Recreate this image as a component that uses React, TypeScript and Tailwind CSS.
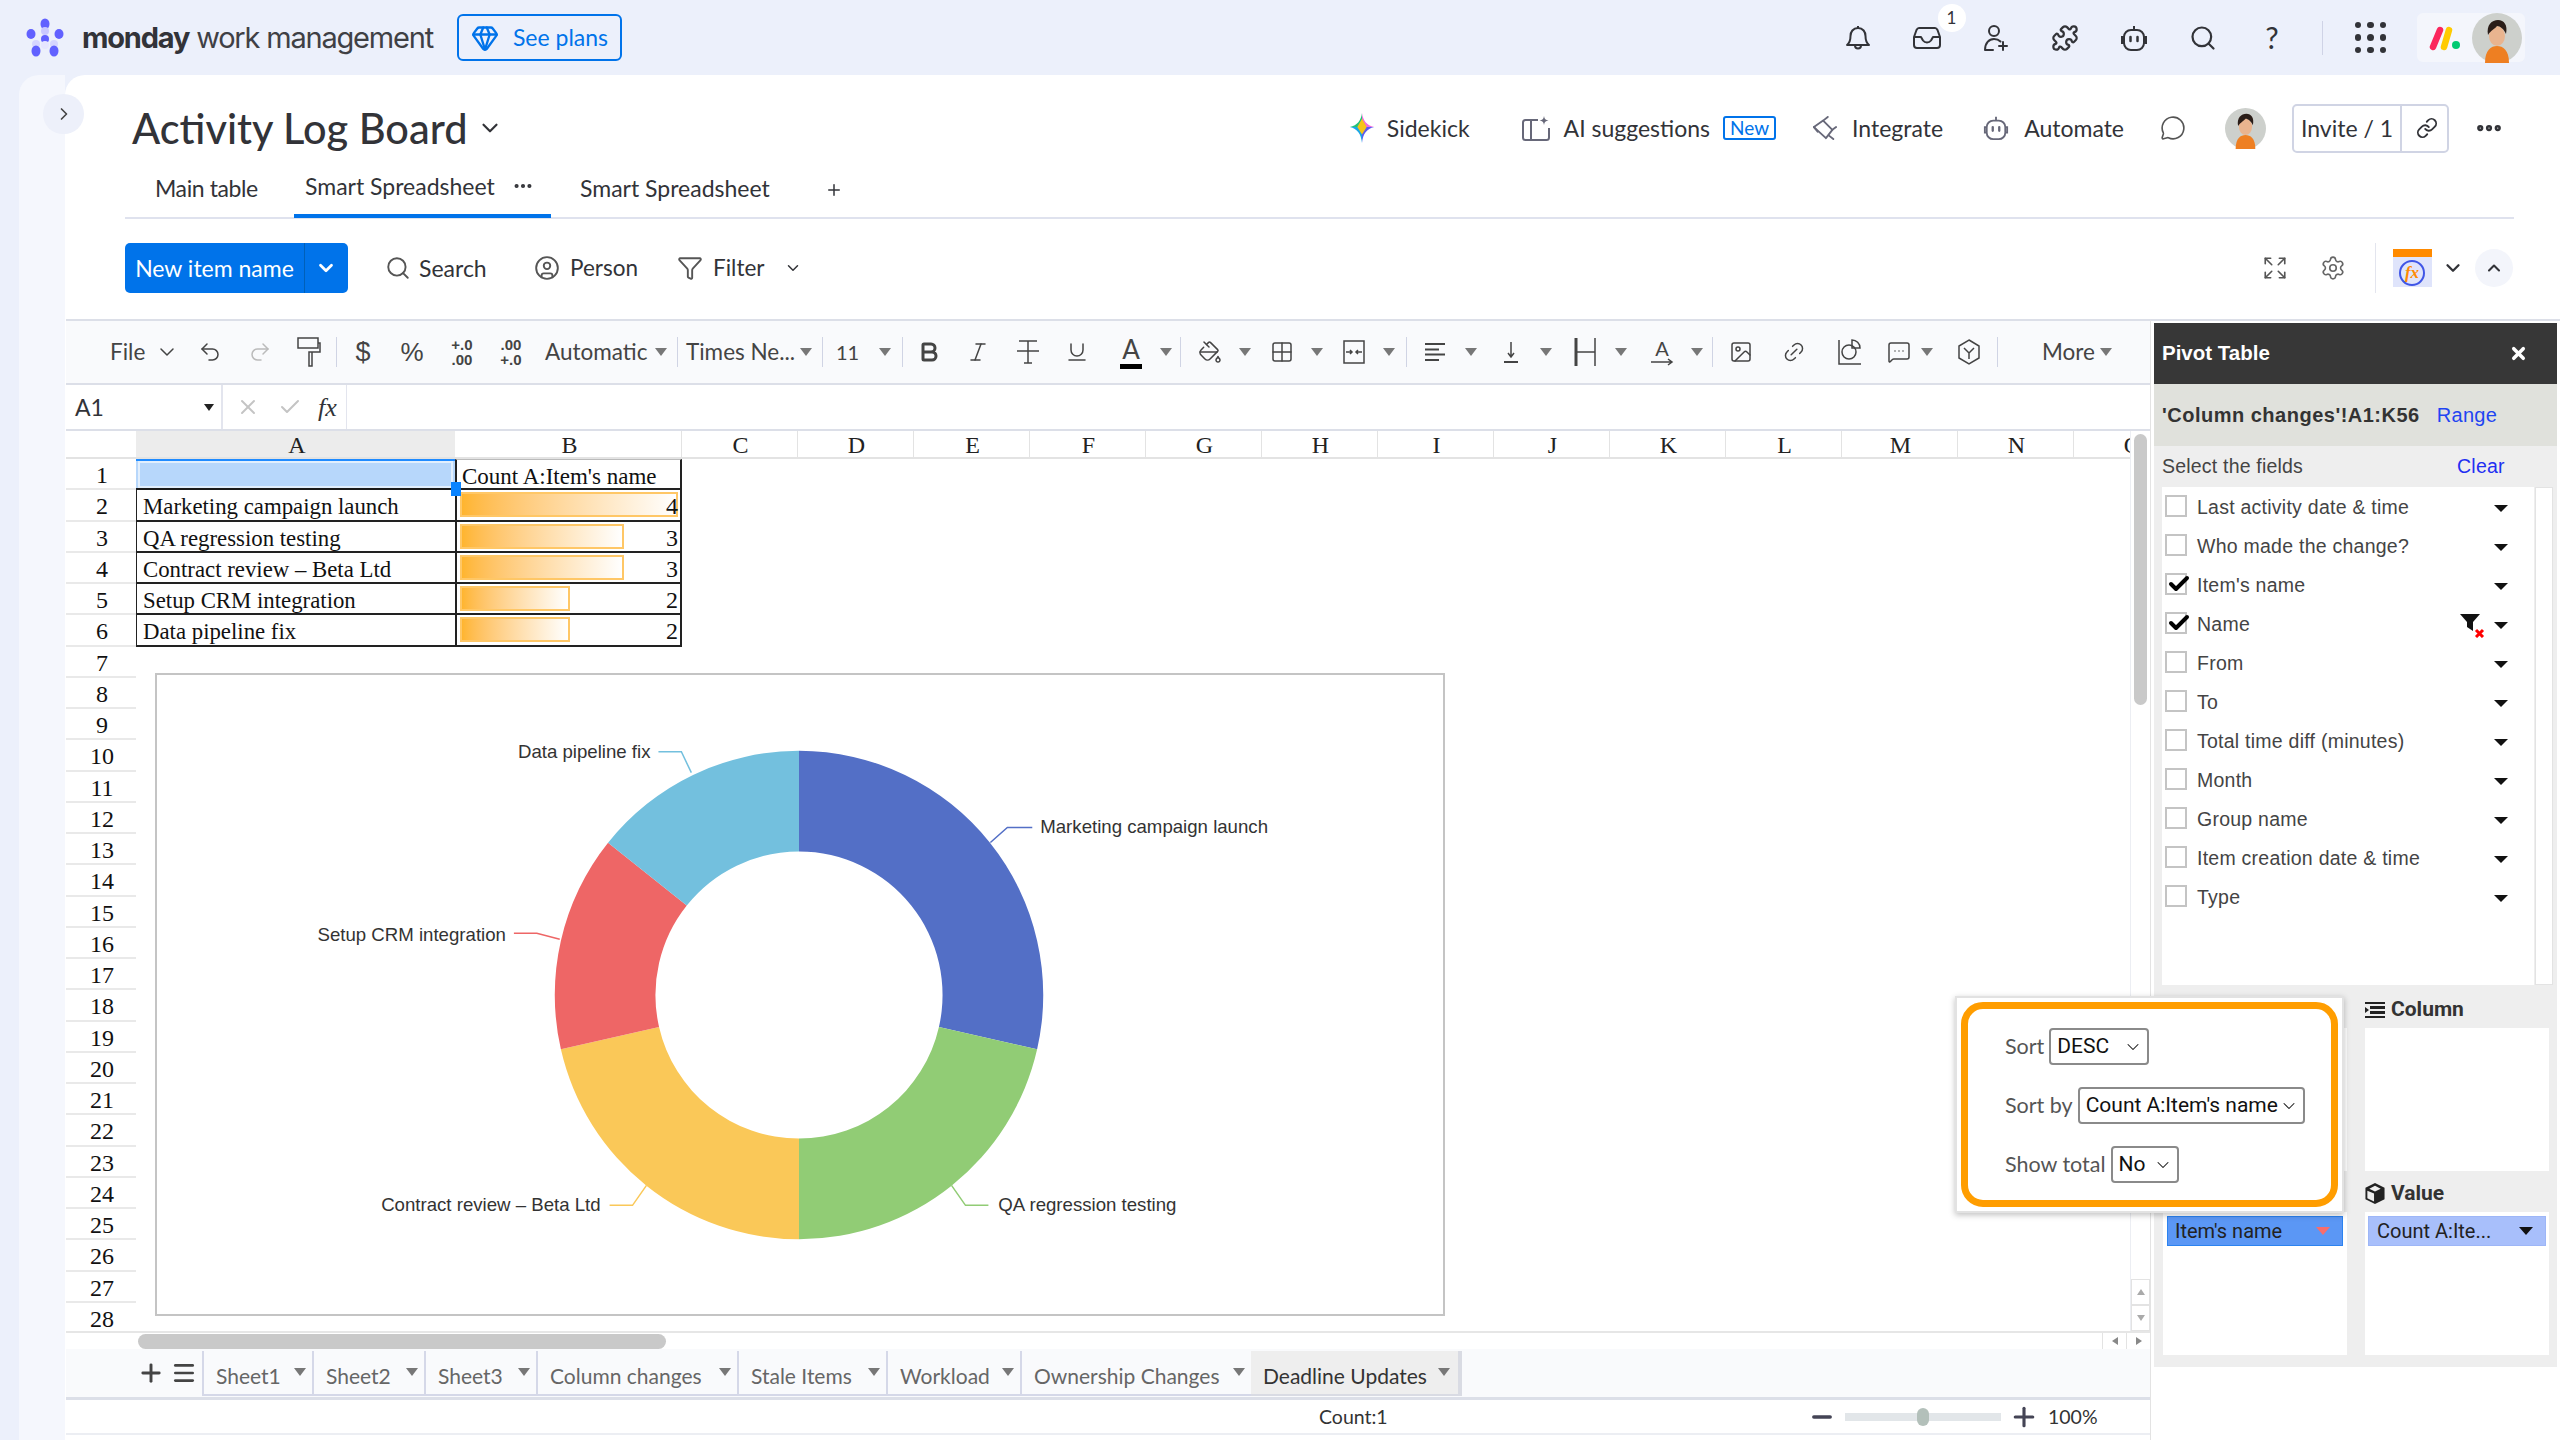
import { Puzzle, Search, ChevronDown, ChevronRight, ChevronUp, Plus, Undo2, Redo2, Bold, Italic, Underline, PaintBucket, Grid2x2, Image, Link2, MessageSquareMore, Settings, Expand, Menu, X, Check, Filter, Link, MessageCircle, Ellipsis, CircleUser, Gem, Minus } from 'lucide-react';

const ui = "font-['Lato',sans-serif]";

const Tri = ({ cls = 'ml-[0px]' }: { cls?: string }) => (
  <svg viewBox="0 0 12 8" className={`w-[12px] h-[8px] shrink-0 ${cls}`}><path d="M0 0h12L6 8z" fill="#777" /></svg>
);

const Divider = ({ cls }: { cls: string }) => <div className={`w-[1px] h-[30px] bg-[#d0d4e4] shrink-0 ${cls}`} />;

const Avatar = ({ cls }: { cls: string }) => (
  <svg viewBox="0 0 50 50" className={cls}>
    <circle cx="25" cy="25" r="25" fill="#cdd0cc" />
    <path d="M13 50c0-13 6-17 12-17s12 4 12 17z" fill="#ee7f22" />
    <ellipse cx="25" cy="23" rx="8" ry="10" fill="#e9b48f" />
    <path d="M16 22c-2-10 4-15 10-15s10 5 8 14c-2-5-6-8-9-8-2 3-6 4-9 9z" fill="#2a1d18" />
  </svg>
);

const Logo = () => (
  <svg viewBox="0 0 40 40" className="w-[40px] h-[40px] shrink-0">
    <ellipse cx="19" cy="6" rx="4.5" ry="5.5" fill="#6161ff" />
    <ellipse cx="19" cy="13" rx="4" ry="4" fill="#c9c9ff" />
    <ellipse cx="5" cy="16" rx="4.5" ry="5" fill="#6161ff" />
    <ellipse cx="33" cy="16" rx="4.5" ry="5" fill="#6161ff" />
    <circle cx="19" cy="21" r="4" fill="#6161ff" />
    <ellipse cx="10" cy="26" rx="4" ry="4" fill="#d5d5ff" />
    <ellipse cx="28" cy="26" rx="4" ry="4" fill="#d5d5ff" />
    <ellipse cx="19" cy="27" rx="4" ry="4" fill="#e6e6ff" />
    <ellipse cx="10" cy="33" rx="4.5" ry="5.5" fill="#6161ff" />
    <ellipse cx="28" cy="33" rx="4.5" ry="5.5" fill="#6161ff" />
  </svg>
);

const MondayMark = () => (
  <svg viewBox="0 0 32 26" className="w-[32px] h-[26px]">
    <path d="M4 22 L11 5" stroke="#fb275d" strokeWidth="6.5" strokeLinecap="round" />
    <path d="M15 22 L20 5" stroke="#ffcb00" strokeWidth="6.5" strokeLinecap="round" />
    <circle cx="27" cy="20" r="4" fill="#00ca72" />
  </svg>
);

const SidekickStar = () => (
  <svg viewBox="0 0 26 32" className="w-[26px] h-[30px] shrink-0">
    <path d="M13 0c1 8 5 13 13 15H13z" fill="#f06bdc" />
    <path d="M13 0C12 8 8 13 0 15h13z" fill="#22c27a" />
    <path d="M0 15c8 2 12 7 13 17V15z" fill="#19a7e8" />
    <path d="M26 15c-8 2-12 7-13 17V15z" fill="#5a5cf0" />
    <path d="M13 6l5 9-5 8-5-8z" fill="#f5c518" />
  </svg>
);

const BellIcon = () => (
  <svg viewBox="0 0 26 26" className="w-[26px] h-[26px]" fill="none" stroke="#323338" strokeWidth="2" strokeLinejoin="round">
    <path d="M13 3c-5 0-7.500 4-7.500 8 0 5-1 7-3.500 9h22c-2.500-2-3.500-4-3.500-9 0-4-2.500-8-7.500-8z" />
    <path d="M13 1v2M10 20.500c0 4 6 4 6 0" />
  </svg>
);

const TrayIcon = () => (
  <svg viewBox="0 0 28 24" className="w-[28px] h-[24px]" fill="none" stroke="#323338" strokeWidth="2" strokeLinejoin="round">
    <path d="M6 2h16c1 0 2 1 2.500 2L27 11v8c0 2-1 3-3 3H4c-2 0-3-1-3-3v-8l2.500-7C4 3 5 2 6 2z" />
    <path d="M1 11h7l2 3.500c2 2.500 6 2.500 8 0l2-3.500h7" />
  </svg>
);

const AddUserIcon = () => (
  <svg viewBox="0 0 26 28" className="w-[26px] h-[28px]" fill="none" stroke="#323338" strokeWidth="2" strokeLinecap="round">
    <circle cx="11" cy="7" r="5" />
    <path d="M2 26c0-7 4-11 9-11 3 0 5 1 6.500 2.500M2 26h8M20 18v8M16 22h8" />
  </svg>
);

const RobotIcon = ({ color, cls }: { color: string; cls: string }) => (
  <svg viewBox="0 0 28 28" className={cls} fill="none" stroke={color} strokeWidth="2">
    <rect x="4" y="6" width="20" height="20" rx="7" />
    <path d="M14 2v4M4 13H2v6h2M24 13h2v6h-2" />
    <path d="M10.500 13v4M17.500 13v4" strokeWidth="2.500" strokeLinecap="round" />
  </svg>
);

const AiIcon = () => (
  <svg viewBox="0 0 28 26" className="w-[28px] h-[26px] ml-[52px]" fill="none" stroke="#676879" strokeWidth="2">
    <path d="M16 5H3.500C2 5 1 6 1 7.500v15C1 24 2 25 3.500 25h21c1.500 0 2.500-1 2.500-2.500V13M9 5v20" />
    <path d="M22 1c.5 3 1.500 4 4.500 4.500-3 .5-4 1.500-4.500 4.500-.5-3-1.500-4-4.500-4.500C20.500 5 21.500 4 22 1z" fill="#676879" stroke="none" />
  </svg>
);

const PlugIcon = () => (
  <svg viewBox="0 0 26 26" className="w-[24px] h-[24px] ml-[37px]" fill="none" stroke="#676879" strokeWidth="2" strokeLinecap="round" strokeLinejoin="round">
    <path d="M1 12l10-7 10 10-7 9z" />
    <path d="M11 5l5-4M21 15l4-3M17 21l5 4M1 12l4 5" />
  </svg>
);

const CHART = [
  { c: '#536fc6', a: 0, b: 102.857 },
  { c: '#91cc75', a: 102.857, b: 180 },
  { c: '#fac858', a: 180, b: 257.143 },
  { c: '#ee6666', a: 257.143, b: 308.571 },
  { c: '#73c0de', a: 308.571, b: 360 },
];

const arc = (a: number, b: number) => {
  const cx = 643, cy = 321, R = 245, r = 144;
  const p = (rad: number, deg: number) => {
    const t = (deg * Math.PI) / 180;
    return `${(cx + rad * Math.sin(t)).toFixed(2)} ${(cy - rad * Math.cos(t)).toFixed(2)}`;
  };
  const large = b - a > 180 ? 1 : 0;
  return `M${p(R, a)}A${R} ${R} 0 ${large} 1 ${p(R, b)}L${p(r, b)}A${r} ${r} 0 ${large} 0 ${p(r, a)}Z`;
};

const Donut = () => (
  <div className="absolute left-[89px] top-[242px] w-[1290px] h-[643px] bg-white border-2 border-[#c4c4c4]">
    <svg viewBox="0 0 1288 641" className="w-full h-full">
      {CHART.map((s) => <path key={s.c} d={arc(s.a, s.b)} fill={s.c} />)}
      <g fill="none" strokeWidth="1.5">
        <path d="M502 77h23l10 21" stroke="#73c0de" />
        <path d="M835 168l17-15h25" stroke="#536fc6" />
        <path d="M403 265l-23-6h-23" stroke="#ee6666" />
        <path d="M490 512l-14 20h-23" stroke="#fac858" />
        <path d="M796 512l14 20h23" stroke="#91cc75" />
      </g>
      <g fontFamily="'Liberation Sans',sans-serif" fontSize="18.7" fill="#333">
        <text x="885" y="159">Marketing campaign launch</text>
        <text x="843" y="538">QA regression testing</text>
        <text x="444" y="538" textAnchor="end">Contract review – Beta Ltd</text>
        <text x="349" y="267" textAnchor="end">Setup CRM integration</text>
        <text x="494" y="83" textAnchor="end">Data pipeline fix</text>
      </g>
    </svg>
  </div>
);

const COLS = ['C', 'D', 'E', 'F', 'G', 'H', 'I', 'J', 'K', 'L', 'M', 'N', 'O'];
const ROWS = Array.from({ length: 28 }, (_, i) => i + 1);
const DATA = [
  { name: 'Marketing campaign launch', n: 4, w: 'w-[218px]' },
  { name: 'QA regression testing', n: 3, w: 'w-[164px]' },
  { name: 'Contract review – Beta Ltd', n: 3, w: 'w-[164px]' },
  { name: 'Setup CRM integration', n: 2, w: 'w-[110px]' },
  { name: 'Data pipeline fix', n: 2, w: 'w-[110px]' },
];

const FIELDS = [
  'Last activity date & time', 'Who made the change?', "Item's name", 'Name', 'From', 'To',
  'Total time diff (minutes)', 'Month', 'Group name', 'Item creation date & time', 'Type',
];

const TABS = [
  { t: 'Sheet1', w: 'w-[110px]' },
  { t: 'Sheet2', w: 'w-[112px]' },
  { t: 'Sheet3', w: 'w-[112px]' },
  { t: 'Column changes', w: 'w-[201px]' },
  { t: 'Stale Items', w: 'w-[149px]' },
  { t: 'Workload', w: 'w-[134px]' },
  { t: 'Ownership Changes', w: 'w-[231px]' },
];

const Toolbar = () => (
  <div className="flex items-center h-[66px] bg-[#f9fafc] border-t-2 border-b-2 border-[#dcdfe8] pl-[44px] text-[#444] shrink-0">
    <span className={`${ui} text-[22.5px] w-[34px] shrink-0`}>File</span>
    <ChevronDown className="w-[24px] h-[24px] ml-[11px] shrink-0" strokeWidth={1.5} />
    <Undo2 className="w-[24px] h-[24px] ml-[19px] shrink-0" strokeWidth={1.5} />
    <Redo2 className="w-[24px] h-[24px] ml-[26px] shrink-0 text-[#bbb]" strokeWidth={1.5} />
    <svg viewBox="0 0 24 30" className="w-[24px] h-[30px] ml-[25px] shrink-0" fill="none" stroke="#444" strokeWidth="1.5">
      <rect x="1" y="1" width="20" height="10" /><path d="M21 6h2v9H12v14h3V15" />
    </svg>
    <Divider cls="ml-[15px]" />
    <span className="w-[24px] ml-[14px] text-center text-[27px] font-['Liberation_Sans',sans-serif] shrink-0">$</span>
    <span className="w-[24px] ml-[25px] text-center text-[26px] font-['Liberation_Sans',sans-serif] shrink-0">%</span>
    <span className="w-[24px] ml-[26px] flex flex-col items-center text-[15px] leading-[15px] font-bold font-['Liberation_Sans',sans-serif] shrink-0"><span>+.0</span><span>.00</span></span>
    <span className="w-[24px] ml-[25px] flex flex-col items-center text-[15px] leading-[15px] font-bold font-['Liberation_Sans',sans-serif] shrink-0"><span>.00</span><span>+.0</span></span>
    <span className={`${ui} text-[22.5px] w-[102px] ml-[22px] shrink-0`}>Automatic</span>
    <Tri cls="ml-[8px]" />
    <Divider cls="ml-[10px]" />
    <span className={`${ui} text-[22.5px] w-[105px] ml-[8px] shrink-0 whitespace-nowrap`}>Times Ne...</span>
    <Tri cls="ml-[9px]" />
    <Divider cls="ml-[10px]" />
    <span className={`${ui} text-[20px] w-[17px] ml-[13px] shrink-0`}>11</span>
    <Tri cls="ml-[26px]" />
    <Divider cls="ml-[11px]" />
    <Bold className="w-[24px] h-[26px] ml-[14px] shrink-0" strokeWidth={3} />
    <Italic className="w-[24px] h-[24px] ml-[25px] shrink-0" strokeWidth={1.5} />
    <svg viewBox="0 0 24 26" className="w-[24px] h-[26px] ml-[26px] shrink-0" fill="none" stroke="#444" strokeWidth="1.5">
      <path d="M3 2h18M12 2v22M8 24h8M1 12h22" />
    </svg>
    <Underline className="w-[24px] h-[24px] ml-[25px] shrink-0" strokeWidth={1.5} />
    <span className="w-[24px] ml-[30px] flex flex-col items-center shrink-0">
      <span className={`${ui} text-[26px] leading-[26px]`}>A</span>
      <span className="w-[22px] h-[5px] bg-black mt-[2px]" />
    </span>
    <Tri cls="ml-[17px]" />
    <Divider cls="ml-[8px]" />
    <PaintBucket className="w-[24px] h-[24px] ml-[17px] shrink-0" strokeWidth={1.5} />
    <Tri cls="ml-[17px]" />
    <Grid2x2 className="w-[24px] h-[26px] ml-[19px] shrink-0" strokeWidth={1.5} />
    <Tri cls="ml-[17px]" />
    <svg viewBox="0 0 24 26" className="w-[24px] h-[26px] ml-[19px] shrink-0" fill="none" stroke="#444" strokeWidth="1.5">
      <rect x="2" y="2" width="20" height="22" /><path d="M4 13h6M8 11l2 2-2 2M20 13h-6M16 11l-2 2 2 2" />
    </svg>
    <Tri cls="ml-[17px]" />
    <Divider cls="ml-[11px]" />
    <svg viewBox="0 0 24 20" className="w-[24px] h-[20px] ml-[17px] shrink-0" stroke="#444" strokeWidth="2">
      <path d="M1 2h20M1 7.500h14M1 12.500h20M1 18h14" />
    </svg>
    <Tri cls="ml-[17px]" />
    <svg viewBox="0 0 24 22" className="w-[24px] h-[22px] ml-[22px] shrink-0" fill="none" stroke="#444" strokeWidth="1.5">
      <path d="M12 1v14M9 12l3 4 3-4" /><path d="M5 21h14" strokeWidth="2" />
    </svg>
    <Tri cls="ml-[17px]" />
    <svg viewBox="0 0 24 28" className="w-[24px] h-[28px] ml-[21px] shrink-0" fill="none" stroke="#444">
      <path d="M3 0v28" strokeWidth="3" /><path d="M22 0v28M3 14h19" strokeWidth="1.5" />
    </svg>
    <Tri cls="ml-[18px]" />
    <span className="w-[24px] ml-[23px] flex flex-col items-center shrink-0">
      <span className={`${ui} text-[20px] leading-[20px]`}>A</span>
      <svg viewBox="0 0 24 8" className="w-[24px] h-[8px]" fill="none" stroke="#444" strokeWidth="1.500"><path d="M1 4h21M18 1l4 3-4 3" /></svg>
    </span>
    <Tri cls="ml-[17px]" />
    <Divider cls="ml-[9px]" />
    <Image className="w-[24px] h-[26px] ml-[16px] shrink-0" strokeWidth={1.5} />
    <Link2 className="w-[24px] h-[24px] ml-[29px] shrink-0 -rotate-45" strokeWidth={1.5} />
    <svg viewBox="0 0 24 26" className="w-[24px] h-[26px] ml-[32px] shrink-0" fill="none" stroke="#444" strokeWidth="1.5">
      <path d="M1 1v24h22" /><circle cx="11" cy="13" r="7" /><path d="M14 1a8 8 0 0 1 8 8h-8z" />
    </svg>
    <MessageSquareMore className="w-[24px] h-[24px] ml-[25px] shrink-0" strokeWidth={1.5} />
    <Tri cls="ml-[10px]" />
    <svg viewBox="0 0 24 26" className="w-[24px] h-[26px] ml-[24px] shrink-0" fill="none" stroke="#444" strokeWidth="1.5">
      <path d="M12 1l10 6v12l-10 6-10-6V7z" /><path d="M7 9l5 5 5-5M12 14v6" />
    </svg>
    <Divider cls="ml-[16px]" />
    <span className={`${ui} text-[22.5px] w-[49px] ml-[44px] shrink-0`}>More</span>
    <Tri cls="ml-[9px]" />
  </div>
);

const Grid = () => (
  <div className="relative flex-1 overflow-hidden font-['Liberation_Serif',serif] text-[24px] text-[#111]">
    <div className="flex h-[28px] items-center text-[#222] border-b-2 border-[#e3e3e3]">
      <div className="w-[70px] h-full shrink-0" />
      <div className="w-[319px] h-full shrink-0 bg-[#ececec] text-center pl-[3px] leading-[29px]">A</div>
      <div className="w-[227px] h-full shrink-0 text-center pl-[3px] leading-[29px] border-r border-[#e3e3e3]">B</div>
      {COLS.map((c) => (
        <div key={c} className="w-[116px] h-full shrink-0 text-center pl-[2px] leading-[29px] border-r border-[#e3e3e3]">{c}</div>
      ))}
    </div>
    {ROWS.map((r) => {
      const d = DATA[r - 2];
      return (
        <div key={r} className="flex h-[31.25px]">
          <div className="w-[70px] shrink-0 text-center pl-[2px] leading-[33px] border-b-2 border-[#e9e9e9]">{r}</div>
          {r === 1 && (
            <>
              <div className="relative w-[319px] shrink-0 bg-[#b7d7fb] border-t-2 border-[#1f8bff] outline-2 -outline-offset-4 outline-white/60 border-b-2 border-b-[#1b1b1b]">
                <span className="absolute right-[-6px] bottom-[-8px] w-[10px] h-[14px] bg-[#0a84ff] z-10" />
              </div>
              <div className="w-[227px] shrink-0 pl-[5px] text-[23px] leading-[33px] border-t border-[#bbb] border-l-2 border-r-2 border-b-2 border-l-[#222] border-r-[#222] border-b-[#222] whitespace-nowrap">Count A:Item's name</div>
            </>
          )}
          {d && (
            <>
              <div className="w-[319px] shrink-0 pl-[6px] text-[22.8px] leading-[33px] border-l border-b-2 border-[#222] whitespace-nowrap">{d.name}</div>
              <div className="relative w-[227px] shrink-0 flex items-center border-l-2 border-r-2 border-b-2 border-[#222] pl-[3px]">
                <div className={`h-[25px] ${d.w} bg-gradient-to-r from-[#ffb52e] to-white border-2 border-[#ffc766]`} />
                <span className="absolute right-[2px] top-0 leading-[33px]">{d.n}</span>
              </div>
            </>
          )}
        </div>
      );
    })}
    <Donut />
  </div>
);

const SheetTabs = () => (
  <div className={`${ui} flex h-[51px] shrink-0 bg-[#f9fafc] border-b-[3px] border-[#dcdfe8] pl-[70px] text-[21px] text-[#666]`}>
    <div className="w-[66px] flex items-center shrink-0 text-[#444]">
      <Plus className="w-[28px] h-[28px] ml-[1px]" strokeWidth={2.5} />
      <Menu className="w-[26px] h-[26px] ml-[6px]" strokeWidth={2.5} />
    </div>
    {TABS.map((t) => (
      <div key={t.t} className={`${t.w} flex items-center justify-between pl-[12px] pr-[6px] pt-[6px] mt-[2px] h-[45px] border-l-2 border-b-2 border-[#d5d8e8] shrink-0 whitespace-nowrap`}>
        <span>{t.t}</span>
        <Tri cls="mb-[8px]" />
      </div>
    ))}
    <div className="w-[211px] flex items-center justify-between pl-[12px] pr-[8px] pt-[6px] mt-[2px] h-[45px] bg-[#eeeeee] border-b-2 border-r-4 border-[#d9dbe3] text-[#333] shrink-0 whitespace-nowrap">
      <span>Deadline Updates</span>
      <Tri cls="mb-[8px]" />
    </div>
  </div>
);

const StatusBar = () => (
  <div className={`${ui} relative flex items-center h-[35px] shrink-0 border-b-2 border-[#eceef3] text-[19.5px] text-[#333]`}>
    <span className="ml-[1253px] w-[64px]">Count:1</span>
    <Minus className="w-[28px] h-[28px] ml-[425px] shrink-0 text-[#445]" strokeWidth={3} />
    <div className="relative w-[156px] h-[8px] ml-[9px] bg-[#e2e6e9] shrink-0">
      <div className="absolute left-[72px] top-[-5px] w-[12px] h-[18px] rounded-full bg-[#b3c0ba]" />
    </div>
    <Plus className="w-[30px] h-[30px] ml-[8px] shrink-0 text-[#445]" strokeWidth={2.5} />
    <span className="ml-[9px]">100%</span>
  </div>
);

const PivotPanel = () => (
  <div className="w-[410px] shrink-0 flex flex-col border-l border-[#e3e3e3] border-t-2 border-t-[#dcdfe8] pl-[3px] pr-[3px] font-['Liberation_Sans',sans-serif]">
    <div className="flex flex-col bg-[#eeeeee] mt-[2px] h-[1044px]">
      <div className="flex items-center justify-between h-[61px] bg-[#373737] pl-[8px] pr-[29px] text-white font-bold text-[20.5px] shrink-0">
        <span>Pivot Table</span>
        <X className="w-[19px] h-[19px]" strokeWidth={4.5} />
      </div>
      <div className="flex items-center h-[62px] bg-[#e0e1dc] pl-[8px] text-[20px] shrink-0">
        <span className="font-bold text-[#333] tracking-[0.5px]">'Column changes'!A1:K56</span>
        <span className="ml-[17px] text-[#1f45f2] tracking-[0.3px]">Range</span>
      </div>
      <div className="flex items-center h-[41px] pl-[8px] text-[19.500px] text-[#444] tracking-[0.2px] shrink-0">
        <span>Select the fields</span>
        <span className="ml-[154px] text-[#1f2ff2]">Clear</span>
      </div>
      <div className="flex h-[498px] pl-[8px] pr-[6px] shrink-0">
        <div className="w-[372px] bg-white pt-[1px] shrink-0">
          {FIELDS.map((f) => {
            const on = f === "Item's name" || f === 'Name';
            return (
              <div key={f} className="relative flex items-center h-[39px] text-[19.500px] text-[#444] tracking-[0.25px]">
                <span className="relative w-[22px] h-[22px] ml-[3px] mb-[3px] border-2 border-[#c4c4c4] bg-white shrink-0">
                  {on && <Check className="absolute left-[0px] top-[-3px] w-[24px] h-[24px] text-black" strokeWidth={4} />}
                </span>
                <span className="ml-[10px] whitespace-nowrap">{f}</span>
                {f === 'Name' && (
                  <span className="absolute left-[297px] top-[7px] w-[26px] h-[26px]">
                    <svg viewBox="0 0 26 26" className="w-full h-full">
                      <path d="M1 2h20l-7 8v9l-6-4v-5z" fill="#111" />
                      <path d="M17 18l7 7M24 18l-7 7" stroke="#f00" strokeWidth="3" />
                    </svg>
                  </span>
                )}
                <svg viewBox="0 0 14 7" className="absolute left-[332px] top-[17px] w-[14px] h-[7px]"><path d="M0 0h14L7 7z" fill="#111" /></svg>
              </div>
            );
          })}
        </div>
        <div className="w-[18px] bg-white border border-[#e3e3e3] ml-[1px] shrink-0" />
      </div>
      <div className="flex pl-[9px] pt-[10px] gap-[18px] font-['Roboto',sans-serif]">
        <div className="w-[184px] shrink-0 flex flex-col">
          <div className="h-[33px]" />
          <div className="h-[143px] bg-white" />
          <div className="h-[41px]" />
          <div className="h-[143px] bg-white pt-[4px] px-[4px]">
            <div className="flex items-center justify-between h-[30px] bg-[#5b97f5] border border-[#2c83f0] pl-[7px] pr-[12px] text-[20px] text-[#222]">
              <span>Item's name</span>
              <svg viewBox="0 0 14 8" className="w-[14px] h-[8px]"><path d="M0 0h14L7 8z" fill="#f76d6d" /></svg>
            </div>
          </div>
        </div>
        <div className="w-[184px] shrink-0 flex flex-col">
          <div className="h-[33px] flex items-center pb-[3px] text-[21px] font-bold text-[#333]">
            <svg viewBox="0 0 20 16" className="w-[20px] h-[16px]" fill="#222"><path d="M0 0h20v2H0zM5 4h15v3H5zM5 9h15v3H5zM0 14h20v2H0zM0 5l4 3-4 3z" /></svg>
            <span className="ml-[6px]">Column</span>
          </div>
          <div className="h-[143px] bg-white" />
          <div className="h-[41px] flex items-center pt-[4px] text-[21px] font-bold text-[#333]">
            <svg viewBox="0 0 20 22" className="w-[20px] h-[21px]" fill="#222"><path d="M10 0l10 5v12l-10 5-10-5V5zM10 3L4 6l6 3 6-3zM2 8v8l7 3.500V11z" fillRule="evenodd" /></svg>
            <span className="ml-[6px]">Value</span>
          </div>
          <div className="h-[143px] bg-white pt-[4px] px-[3px]">
            <div className="flex items-center justify-between h-[30px] bg-[#a8bffb] border border-[#9db6f7] pl-[8px] pr-[12px] text-[20px] text-[#222]">
              <span>Count A:Ite...</span>
              <svg viewBox="0 0 14 8" className="w-[14px] h-[8px]"><path d="M0 0h14L7 8z" fill="#111" /></svg>
            </div>
          </div>
        </div>
      </div>
    </div>
  </div>
);

const Field = ({ label, value, w }: { label: string; value: string; w: string }) => (
  <div className="flex items-center">
    <span className={`${ui} text-[#555] text-[21.5px]`}>{label}</span>
    <span className={`${w} ml-[5px] h-[37px] flex items-center justify-between pl-[6px] pr-[4px] border-2 border-[#8a8a8a] rounded-[4px] text-[21px] text-[#111] font-['Roboto',sans-serif] whitespace-nowrap`}>
      {value}
      <ChevronDown className="w-[20px] h-[20px] shrink-0" strokeWidth={1.25} />
    </span>
  </div>
);

export default function App() {
  return (
    <div className={`${ui} relative w-[2560px] h-[1440px] overflow-hidden bg-[#ecf0fb] flex flex-col text-[#323338]`}>
      <header className="flex items-center h-[75px] shrink-0">
        <div className="ml-[26px]"><Logo /></div>
        <span className="ml-[16px] text-[29px] w-[351px] whitespace-nowrap font-['Inter',sans-serif] tracking-[-1.2px]"><span className="font-bold">monday</span> <span className="text-[#3f4045]">work management</span></span>
        <button className="ml-[24px] w-[165px] h-[47px] flex items-center justify-center gap-[14px] border-2 border-[#0073ea] rounded-[6px] text-[#0073ea] text-[23px]">
          <Gem className="w-[28px] h-[28px]" strokeWidth={2} />
          See plans
        </button>
        <div className="flex-1" />
        <div className="flex items-center text-[#323338]">
          <div className="w-[69px] flex justify-center"><BellIcon /></div>
          <div className="relative w-[69px] flex justify-center">
            <TrayIcon />
            <span className="absolute left-[45px] top-[-22px] w-[28px] h-[28px] rounded-full bg-white text-center text-[17px] leading-[28px]">1</span>
          </div>
          <div className="w-[69px] flex justify-center"><AddUserIcon /></div>
          <div className="w-[69px] flex justify-center"><Puzzle className="w-[28px] h-[28px]" strokeWidth={1.9} /></div>
          <div className="w-[69px] flex justify-center"><RobotIcon color="#323338" cls="w-[28px] h-[28px]" /></div>
          <div className="w-[69px] flex justify-center"><Search className="w-[28px] h-[28px]" strokeWidth={1.9} /></div>
          <div className="w-[69px] flex justify-center text-[30px]">?</div>
        </div>
        <div className="w-[1px] h-[34px] bg-[#cfd3e6] ml-[15px]" />
        <div className="ml-[32px] grid grid-cols-3 gap-[6px]">
          {[0, 1, 2, 3, 4, 5, 6, 7, 8].map((i) => <span key={i} className="w-[6.5px] h-[6.500px] rounded-full bg-[#323338]" />)}
        </div>
        <div className="ml-[31px] mr-[35px] w-[108px] h-[49px] rounded-[6px] bg-[#f4f6fc] flex items-center justify-between pl-[12px] pr-[3px]">
          <MondayMark />
          <Avatar cls="w-[50px] h-[50px]" />
        </div>
      </header>

      <div className="flex-1 flex relative min-h-0">
        <div className="w-[46px] ml-[19px] shrink-0 rounded-tl-[20px] bg-[#f5f7fd]" />
        <button className="absolute left-[43px] top-[19px] w-[41px] h-[40px] rounded-full bg-[#edf0fa] flex items-center justify-center">
          <ChevronRight className="w-[20px] h-[20px] text-[#444]" strokeWidth={2} />
        </button>
        <main className="flex-1 min-w-0 bg-white rounded-tl-[20px] flex flex-col">
          <div className="flex items-center h-[74px] mt-[16px] shrink-0 text-[23px] whitespace-nowrap">
            <h1 className="ml-[67px] text-[41.5px] font-medium">Activity Log Board</h1>
            <ChevronDown className="w-[26px] h-[26px] ml-[10px]" strokeWidth={2} />
            <div className="flex-1" />
            <SidekickStar />
            <span className="ml-[12px]">Sidekick</span>
            <AiIcon />
            <span className="ml-[14px]">AI suggestions</span>
            <span className="ml-[13px] w-[53px] h-[24px] border-2 border-[#0073ea] rounded-[3px] text-[#0073ea] text-[19px] leading-[20px] text-center">New</span>
            <PlugIcon />
            <span className="ml-[15px]">Integrate</span>
            <RobotIcon color="#676879" cls="w-[26px] h-[26px] ml-[40px]" />
            <span className="ml-[15px]">Automate</span>
            <MessageCircle className="w-[26px] h-[26px] ml-[36px] text-[#555]" strokeWidth={1.5} />
            <Avatar cls="w-[41px] h-[41px] ml-[39px]" />
            <div className="ml-[26px] flex w-[157px] h-[49px] border-2 border-[#d0d4e4] rounded-[5px] items-center">
              <span className="w-[108px] text-center border-r-2 border-[#d0d4e4] leading-[45px]">Invite / 1</span>
              <Link className="w-[22px] h-[22px] ml-[14px]" strokeWidth={2} />
            </div>
            <Ellipsis className="w-[30px] h-[30px] ml-[25px] mr-[56px]" strokeWidth={3} />
          </div>

          <nav className="flex ml-[60px] mr-[46px] h-[54px] shrink-0 border-b-2 border-[#dfe2ee] text-[23px] whitespace-nowrap">
            <div className="flex items-center h-[46px] ml-[30px] w-[139px] tracking-[-0.4px]">Main table</div>
            <div className="flex items-center h-[53px] pb-[7px] w-[257px] pl-[11px] border-b-[4px] border-[#0073ea]">
              Smart Spreadsheet
              <Ellipsis className="w-[22px] h-[22px] ml-[17px]" strokeWidth={2.5} />
            </div>
            <div className="flex items-center h-[46px] ml-[29px]">Smart Spreadsheet</div>
            <Plus className="w-[18px] h-[18px] ml-[55px] mt-[16px]" strokeWidth={2} />
          </nav>

          <div className="flex items-center h-[50px] mt-[24px] mb-[26px] ml-[60px] shrink-0 text-[23px] whitespace-nowrap">
            <div className="flex h-[50px] w-[223px] rounded-[5px] bg-[#0073ea] text-white items-center">
              <span className="w-[180px] text-center border-r border-[#0060b9] leading-[50px]">New item name</span>
              <ChevronDown className="w-[22px] h-[22px] ml-[10px]" strokeWidth={3} />
            </div>
            <Search className="w-[26px] h-[26px] ml-[37px] text-[#555]" strokeWidth={1.75} />
            <span className="ml-[8px] w-[68px]">Search</span>
            <CircleUser className="w-[26px] h-[26px] ml-[47px] text-[#555]" strokeWidth={1.75} />
            <span className="ml-[10px] w-[68px] text-[22.5px]">Person</span>
            <Filter className="w-[26px] h-[26px] ml-[39px] text-[#555]" strokeWidth={1.75} />
            <span className="ml-[10px] w-[51px] text-[22.5px]">Filter</span>
            <ChevronDown className="w-[18px] h-[18px] ml-[20px]" strokeWidth={2} />
            <div className="flex-1" />
            <Expand className="w-[26px] h-[26px] text-[#555]" strokeWidth={1.5} />
            <Settings className="w-[26px] h-[26px] ml-[32px] text-[#666]" strokeWidth={1.5} />
            <div className="w-[1px] h-[50px] bg-[#e3e5ee] ml-[29px]" />
            <div className="relative ml-[17px] w-[39px] h-[38px] bg-[#dfe4fb] overflow-hidden shrink-0">
              <div className="h-[8px] bg-[#ff8a00]" />
              <div className="absolute left-[6px] top-[11px] w-[26px] h-[26px] rounded-full border-2 border-[#3f55e6] text-center text-[17px] leading-[21px] italic font-bold text-[#ff8a00] font-['Liberation_Serif',serif]">fx</div>
            </div>
            <ChevronDown className="w-[22px] h-[22px] ml-[10px]" strokeWidth={2.5} />
            <div className="ml-[11px] mr-[47px] w-[38px] h-[38px] rounded-full bg-[#f3f5fb] flex items-center justify-center">
              <ChevronUp className="w-[20px] h-[20px]" strokeWidth={2.5} />
            </div>
          </div>

          <div className="flex-1 flex min-h-0">
            <div className="flex-1 min-w-0 flex flex-col ml-[1px]">
              <Toolbar />
              <div className={`${ui} flex items-center h-[46px] shrink-0 border-b-2 border-[#dcdfe8] text-[23px]`}>
                <span className="w-[157px] pl-[9px] flex items-center justify-between pr-[7px] h-full border-r-2 border-[#e3e5ee]">
                  A1
                  <svg viewBox="0 0 10 7" className="w-[10px] h-[7px]"><path d="M0 0h10L5 7z" fill="#222" /></svg>
                </span>
                <X className="w-[24px] h-[24px] ml-[13px] text-[#c4c4c4]" strokeWidth={2} />
                <Check className="w-[24px] h-[24px] ml-[18px] text-[#c4c4c4]" strokeWidth={2} />
                <span className="ml-[16px] w-[28px] italic font-['Liberation_Serif',serif] text-[26px] pr-[24px]">fx</span>
                <span className="w-[1px] h-full bg-[#e3e5ee]" />
              </div>
              <div className="flex h-[900px] shrink-0">
                <Grid />
                <div className="w-[20px] shrink-0 flex flex-col items-center border-l border-[#eceef3] pt-[3px]">
                  <div className="w-[13px] h-[271px] rounded-full bg-[#c9c9c9]" />
                  <div className="flex-1" />
                  <div className="w-full h-[26px] border border-[#e3e3e3] flex items-center justify-center">
                    <svg viewBox="0 0 8 6" className="w-[8px] h-[6px]"><path d="M4 0l4 6H0z" fill="#aaa" /></svg>
                  </div>
                  <div className="w-full h-[26px] border border-[#e3e3e3] flex items-center justify-center">
                    <svg viewBox="0 0 8 6" className="w-[8px] h-[6px]"><path d="M0 0h8L4 6z" fill="#aaa" /></svg>
                  </div>
                </div>
              </div>
              <div className="flex items-center h-[18px] shrink-0 border-t-2 border-[#e6e6e6]">
                <div className="w-[70px] shrink-0" />
                <div className="w-[528px] ml-[2px] h-[15px] rounded-full bg-[#c9c9c9] shrink-0" />
                <div className="flex-1" />
                <div className="w-[24px] h-full border-l border-[#e3e3e3] flex items-center justify-center">
                  <svg viewBox="0 0 6 8" className="w-[6px] h-[8px]"><path d="M6 0v8L0 4z" fill="#888" /></svg>
                </div>
                <div className="w-[24px] h-full border-l border-[#e3e3e3] flex items-center justify-center">
                  <svg viewBox="0 0 6 8" className="w-[6px] h-[8px]"><path d="M0 0v8l6-4z" fill="#888" /></svg>
                </div>
              </div>
              <SheetTabs />
              <StatusBar />
            </div>
            <PivotPanel />
          </div>
        </main>
      </div>

      <div className="absolute left-[1955px] top-[996px] w-[389px] h-[217px] bg-white border-2 border-[#e2e2e2] shadow-[0_2px_6px_rgba(0,0,0,0.25)] p-[4px]">
        <div className="h-full border-[7px] border-[#ff9d00] rounded-[22px] pl-[37px] pt-[19px] flex flex-col gap-[22px]">
          <Field label="Sort" value="DESC" w="w-[100px]" />
          <Field label="Sort by" value="Count A:Item's name" w="w-[227px]" />
          <Field label="Show total" value="No" w="w-[68px]" />
        </div>
      </div>
    </div>
  );
}
